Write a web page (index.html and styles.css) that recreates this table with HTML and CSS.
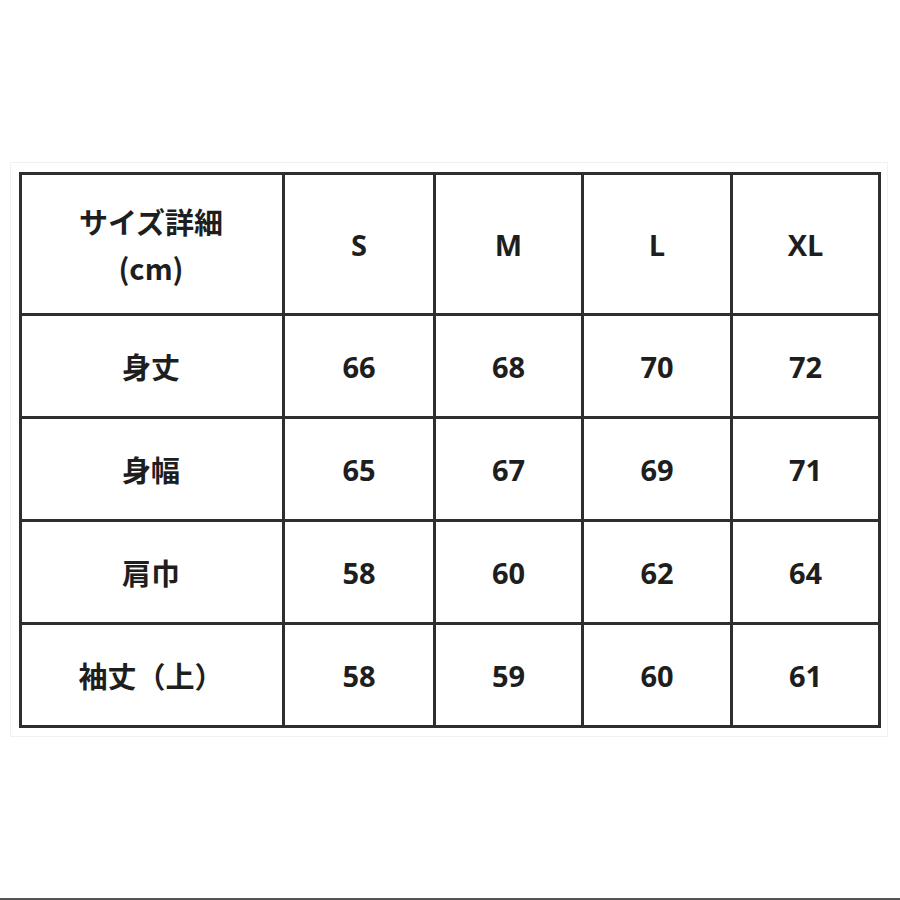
FILE: index.html
```html
<!DOCTYPE html>
<html lang="ja">
<head>
<meta charset="utf-8">
<link rel="stylesheet" href="styles.css">
</head>
<body>
<div class="panel">
  <table class="size-table">
    <colgroup>
      <col class="c-label">
      <col class="c-s">
      <col class="c-m">
      <col class="c-l">
      <col class="c-xl">
    </colgroup>
    <tr class="r-head">
      <td class="label">サイズ詳細<br>(cm)</td>
      <td>S</td><td>M</td><td>L</td><td>XL</td>
    </tr>
    <tr class="r-body">
      <td class="label">身丈</td>
      <td>66</td><td>68</td><td>70</td><td>72</td>
    </tr>
    <tr class="r-body">
      <td class="label">身幅</td>
      <td>65</td><td>67</td><td>69</td><td>71</td>
    </tr>
    <tr class="r-body">
      <td class="label">肩巾</td>
      <td>58</td><td>60</td><td>62</td><td>64</td>
    </tr>
    <tr class="r-body">
      <td class="label">袖丈（上）</td>
      <td>58</td><td>59</td><td>60</td><td>61</td>
    </tr>
  </table>
</div>
<div class="bottom-line"></div>
</body>
</html>
```
FILE: styles.css
```css
html, body {
  margin: 0;
  padding: 0;
  background: #ffffff;
}
body {
  width: 900px;
  height: 900px;
  position: relative;
  overflow: hidden;
  font-family: "Open Sans", "Noto Sans CJK JP", sans-serif;
  color: #1e1e1e;
}
.panel {
  margin: 162px 0 0 10px;
  width: 878px;
  height: 575px;
  box-sizing: border-box;
  border: 1px solid #f1f1f1;
  padding: 9px 0 0 8px;
}
.size-table {
  border-collapse: collapse;
  table-layout: fixed;
  width: 862px;
}
.c-label { width: 263px; }
.c-s { width: 151px; }
.c-m { width: 148px; }
.c-l { width: 149px; }
.c-xl { width: 148px; }
.size-table td {
  border: 3px solid #2e2e2e;
  text-align: center;
  vertical-align: middle;
  font-weight: 700;
  font-size: 29px;
  padding: 0;
}
.size-table td.label {
  font-family: "Noto Sans CJK JP", sans-serif;
  font-size: 29px;
  line-height: 46px;
  padding-right: 2px;
}
.r-head td { height: 138px; }
.r-body td { height: 100px; }
.bottom-line {
  position: absolute;
  left: 0;
  right: 0;
  bottom: 0;
  height: 2px;
  background: #555555;
}
```
